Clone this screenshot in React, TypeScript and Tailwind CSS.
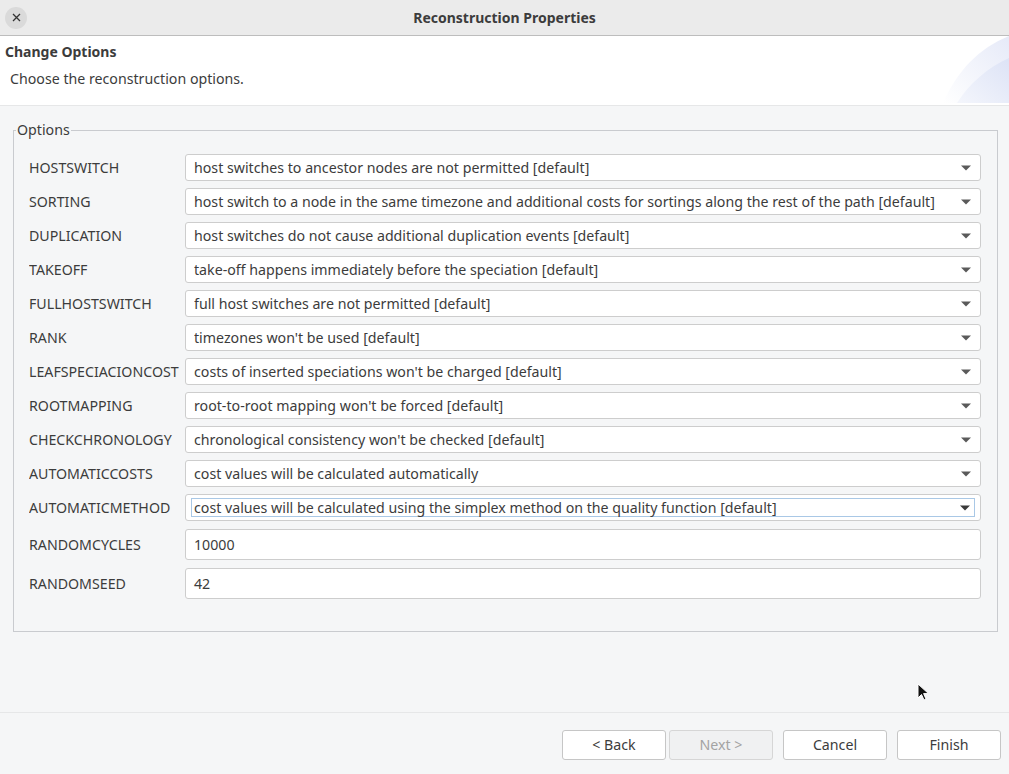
import React from 'react';

const FONT = { fontFamily: '"Noto Sans", "Open Sans", sans-serif' };

type Row =
  | { label: string; kind: 'combo'; value: string; focused?: boolean }
  | { label: string; kind: 'text'; value: string };

const ROWS: Row[] = [
  { label: 'HOSTSWITCH', kind: 'combo', value: 'host switches to ancestor nodes are not permitted [default]' },
  { label: 'SORTING', kind: 'combo', value: 'host switch to a node in the same timezone and additional costs for sortings along the rest of the path [default]' },
  { label: 'DUPLICATION', kind: 'combo', value: 'host switches do not cause additional duplication events [default]' },
  { label: 'TAKEOFF', kind: 'combo', value: 'take-off happens immediately before the speciation [default]' },
  { label: 'FULLHOSTSWITCH', kind: 'combo', value: 'full host switches are not permitted [default]' },
  { label: 'RANK', kind: 'combo', value: "timezones won't be used [default]" },
  { label: 'LEAFSPECIACIONCOST', kind: 'combo', value: "costs of inserted speciations won't be charged [default]" },
  { label: 'ROOTMAPPING', kind: 'combo', value: "root-to-root mapping won't be forced [default]" },
  { label: 'CHECKCHRONOLOGY', kind: 'combo', value: "chronological consistency won't be checked [default]" },
  { label: 'AUTOMATICCOSTS', kind: 'combo', value: 'cost values will be calculated automatically' },
  { label: 'AUTOMATICMETHOD', kind: 'combo', value: 'cost values will be calculated using the simplex method on the quality function [default]', focused: true },
  { label: 'RANDOMCYCLES', kind: 'text', value: '10000' },
  { label: 'RANDOMSEED', kind: 'text', value: '42' },
];

function Arrow({ dark }: { dark?: boolean }) {
  return (
    <svg width="10" height="6" viewBox="0 0 10 6" className="shrink-0">
      <path d="M0 0.5 L10 0.5 L5 5.5 Z" fill={dark ? '#3a3a3a' : '#5a5a5a'} />
    </svg>
  );
}

function Combo({ value, focused }: { value: string; focused?: boolean }) {
  if (focused) {
    return (
      <div className="flex-1 min-w-0 h-[27px] rounded-[3px] border border-[#cdcdcd] bg-white px-[5px] py-[3px] flex">
        <div className="flex-1 min-w-0 flex items-center border border-[#a9c8e6] pl-[2px] pr-[4px]">
          <span className="flex-1 truncate">{value}</span>
          <Arrow dark />
        </div>
      </div>
    );
  }
  return (
    <div className="flex-1 min-w-0 h-[27px] rounded-[3px] border border-[#cdcdcd] bg-white flex items-center pl-[8px] pr-[9px]">
      <span className="flex-1 truncate">{value}</span>
      <Arrow />
    </div>
  );
}

function TextField({ value }: { value: string }) {
  return (
    <div className="flex-1 h-[31px] rounded-[3px] border border-[#cdcdcd] bg-white flex items-center pl-[8px]">
      {value}
    </div>
  );
}

function Button({ label, disabled }: { label: string; disabled?: boolean }) {
  return (
    <div
      className={
        disabled
          ? 'w-[104px] h-[30px] rounded-[3px] border border-[#d6d6d6] bg-[#f0f1f2] text-[#a3a3a3] flex items-center justify-center'
          : 'w-[104px] h-[30px] rounded-[3px] border border-[#c6c6c6] bg-white flex items-center justify-center'
      }
    >
      {label}
    </div>
  );
}

export default function App() {
  return (
    <div
      className="relative w-[1009px] h-[774px] flex flex-col bg-[#f5f6f7] text-[#3c3c3c] text-[14.2px] overflow-hidden"
      style={FONT}
    >
      {/* Title bar */}
      <div className="h-[36px] shrink-0 bg-[#ebebeb] border-b border-[#bdbdbd] flex items-center relative">
        <div className="ml-[5px] w-[22px] h-[22px] rounded-full bg-[#dadada] flex items-center justify-center">
          <svg width="9" height="9" viewBox="0 0 9 9">
            <path d="M1 1 L8 8 M8 1 L1 8" stroke="#333" strokeWidth="1.3" />
          </svg>
        </div>
        <div className="absolute inset-0 flex items-center justify-center font-bold text-[14px] pointer-events-none">
          Reconstruction Properties
        </div>
      </div>

      {/* Header */}
      <div className="h-[70px] shrink-0 bg-white border-b border-[#e6e7e8] flex relative">
        <div className="flex-1 flex flex-col">
          <div className="pl-[5px] pt-[6px] font-bold text-[14px] leading-[20px]">Change Options</div>
          <div className="pl-[10px] pt-[7px] leading-[20px]">Choose the reconstruction options.</div>
        </div>
        <svg width="72" height="68" viewBox="0 0 72 68" className="shrink-0 self-start">
          <defs>
            <linearGradient id="g1" x1="0" y1="1" x2="1" y2="0">
              <stop offset="0" stopColor="#ffffff" />
              <stop offset="1" stopColor="#e6eaf8" />
            </linearGradient>
            <linearGradient id="g2" x1="0" y1="1" x2="1" y2="0">
              <stop offset="0" stopColor="#f4f6fc" />
              <stop offset="1" stopColor="#dde3f6" />
            </linearGradient>
          </defs>
          <path d="M6 67 C20 35 42 12 72 0 L72 67 Z" fill="url(#g1)" />
          <path d="M20 67 C32 48 50 32 72 22 L72 67 Z" fill="url(#g2)" />
        </svg>
      </div>

      {/* Body */}
      <div className="flex-1 flex flex-col pl-[13px] pr-[11px] pt-[15px]">
        <fieldset className="border border-[#c9cbcf] pl-[15px] pr-[16px] pb-[32px] m-0">
          <legend className="ml-[-13px] px-[1px] leading-[18px]">Options</legend>
          <div className="flex flex-col gap-[7px] pt-[15px]">
            {ROWS.map((r) => (
              <div key={r.label} className={r.kind === 'text' ? 'flex items-center mt-[1px]' : 'flex items-center'}>
                <div className="w-[151px] shrink-0 mr-[5px] overflow-hidden whitespace-nowrap">{r.label}</div>
                {r.kind === 'combo' ? <Combo value={r.value} focused={r.focused} /> : <TextField value={r.value} />}
              </div>
            ))}
          </div>
        </fieldset>
      </div>

      {/* Footer */}
      <div className="h-[62px] shrink-0 border-t border-[#e6e7e8] flex items-center justify-end pr-[8px] pt-[2px]">
        <div className="flex items-center">
          <Button label="< Back" />
          <div className="w-[3px]" />
          <Button label="Next >" disabled />
          <div className="w-[10px]" />
          <Button label="Cancel" />
          <div className="w-[10px]" />
          <Button label="Finish" />
        </div>
      </div>

      {/* Mouse pointer */}
      <svg width="14" height="20" viewBox="0 0 14 20" className="absolute left-[917px] top-[683px]">
        <path d="M1 1 L1 15 L4.5 11.5 L7 17 L9 16 L6.6 10.6 L11.5 10.6 Z" fill="#111" stroke="#fff" strokeWidth="1" />
      </svg>
    </div>
  );
}
